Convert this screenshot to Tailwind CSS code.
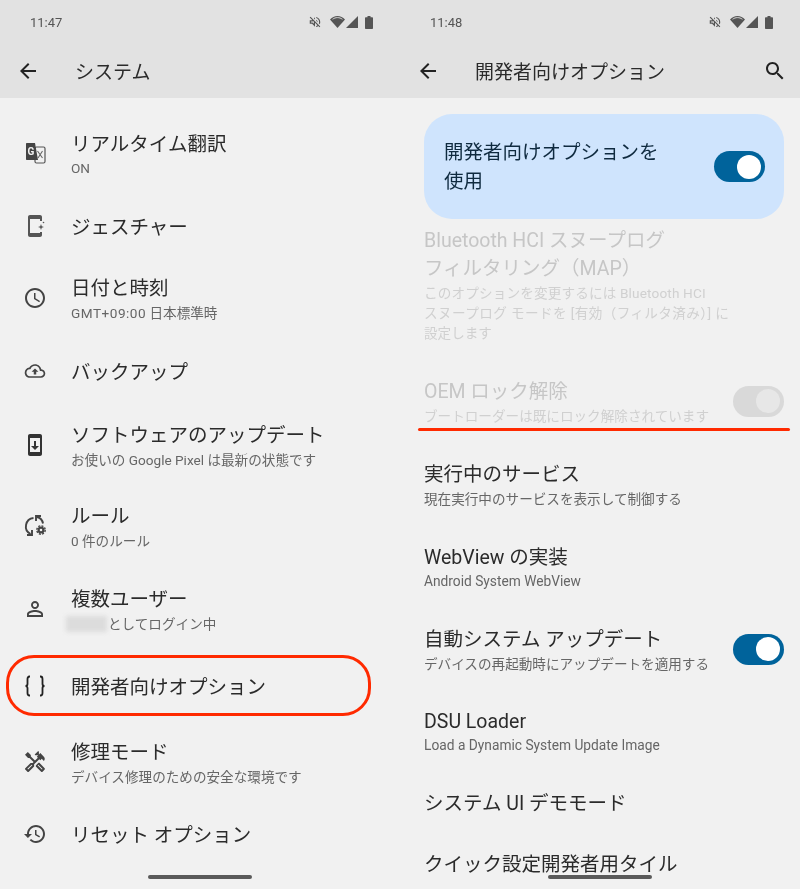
<!DOCTYPE html>
<html lang="ja">
<head>
<meta charset="utf-8">
<script src="https://cdn.jsdelivr.net/npm/@tailwindcss/browser@4"></script>
</head>
<body class="bg-[#f1f1f1]">
<div class="relative w-[800px] h-[889px] overflow-hidden flex blur-[0.35px] [font-family:Roboto,'Noto_Sans_CJK_JP',sans-serif] text-[#2b2b2b]">

  <!-- LEFT -->
  <section class="relative w-[400px] h-[889px] shrink-0 bg-[#f1f1f1]">
    <header class="h-[98px] bg-[#e2e2e2]">
      <div class="h-[44px] flex items-center justify-between pl-[30px] pr-[27px] text-[#555]">
        <span class="text-[13px] leading-none">11:47</span>
        <div class="flex items-center">
          <svg class="w-[14px] h-[14px]" viewBox="0 0 24 24" fill="#555"><path d="M4.340 2.930L2.930 4.340 7.290 8.700 7 9H3v6h4l5 5v-6.590l4.180 4.180c-.65.49-1.380.88-2.180 1.110v2.060c1.340-.3 2.570-.92 3.610-1.750l2.050 2.050 1.410-1.410L4.340 2.930zM10 15.170L7.830 13H5v-2h2.830l.88-.88L10 11.410v3.760zM19 12c0 .82-.15 1.610-.41 2.340l1.530 1.530c.56-1.170.88-2.480.88-3.870 0-4.280-2.990-7.860-7-8.770v2.060c2.890.86 5 3.540 5 6.710zm-7-8l-1.880 1.880L12 7.760zm4.500 8c0-1.770-1.020-3.290-2.500-4.030v1.790l2.480 2.480c.01-.08.02-.16.02-.24z"/></svg>
          <svg class="ml-[8px] w-[15px] h-[12px]" viewBox="0 0 15 12" fill="#555"><path d="M7.500 12L0 3.400C2 1.300 4.600 0 7.500 0S13 1.300 15 3.400z"/><path d="M2.600 3.300C4 2.200 5.700 1.600 7.500 1.600s3.500.6 4.900 1.700" stroke="#e2e2e2" stroke-width=".9" fill="none"/></svg>
          <svg class="ml-[1px] w-[12px] h-[12px]" viewBox="0 0 12 12" fill="#555"><path d="M12 0v12H0z"/></svg>
          <svg class="ml-[7px] w-[8px] h-[13px]" viewBox="0 0 8 13" fill="#555"><path d="M2.500 0h3v1.200H7c.6 0 1 .4 1 1V12c0 .6-.4 1-1 1H1c-.6 0-1-.4-1-1V2.200c0-.6.4-1 1-1h1.500z"/></svg>
        </div>
      </div>
      <div class="h-[54px] flex items-center pl-[16px]">
        <svg class="w-[24px] h-[24px]" viewBox="0 0 24 24" fill="#222"><path d="M20 11H7.830l5.590-5.590L12 4l-8 8 8 8 1.410-1.410L7.830 13H20v-2z"/></svg>
        <h1 class="ml-[35px] h-[28px] pt-[2px] text-[19px] font-normal leading-[28px]">システム</h1>
      </div>
    </header>

    <div class="flex flex-col pl-[23px] pt-[31px]">
      <div class="flex items-center gap-[24px]">
        <svg class="w-[24px] h-[24px]" viewBox="0 0 24 24">
          <rect x="12" y="5" width="10" height="16" rx="1.500" fill="#f1f1f1" stroke="#555" stroke-width="1.200"/>
          <path d="M14.500 9l5 7M19.500 9l-4.500 7" stroke="#666" stroke-width="1.100" fill="none"/>
          <path d="M4 1h8l3 17H4c-.8 0-1-.5-1-1V2c0-.6.4-1 1-1z" fill="#444"/>
          <text x="4.500" y="12.500" font-size="10" font-weight="700" fill="#f1f1f1" font-family="Roboto">G</text>
        </svg>
        <div class="flex flex-col">
          <span class="pt-[2px] text-[19.500px] leading-[28px]">リアルタイム翻訳</span>
          <span class="pb-[2px] text-[13.600px] leading-[18px] text-[#666]">ON</span>
        </div>
      </div>

      <div class="mt-[33px] flex items-center gap-[24px]">
        <svg class="w-[24px] h-[24px]" viewBox="0 0 24 24" fill="#555"><path d="M17 1H7C5.900 1 5 1.900 5 3v18c0 1.100.9 2 2 2h10c1.100 0 2-.9 2-2v-3h-2v1H7V5h10v2h2V3c0-1.100-.9-2-2-2z"/><path d="M18 10l-.8 2.200L15 13l2.200.8L18 16l.8-2.200L21 13l-2.200-.8z"/><circle cx="20.500" cy="8.500" r=".8"/></svg>
        <span class="h-[28px] pt-[2px] text-[19.500px] leading-[28px]">ジェスチャー</span>
      </div>

      <div class="mt-[33px] flex items-center gap-[24px]">
        <svg class="w-[24px] h-[24px]" viewBox="0 0 24 24" fill="#444"><path d="M11.990 2C6.470 2 2 6.480 2 12s4.470 10 9.990 10C17.520 22 22 17.520 22 12S17.520 2 11.990 2zM12 20c-4.420 0-8-3.580-8-8s3.580-8 8-8 8 3.580 8 8-3.580 8-8 8zm.5-13H11v6l5.250 3.150.75-1.230-4.500-2.670z"/></svg>
        <div class="flex flex-col">
          <span class="pt-[2px] text-[19.500px] leading-[28px]">日付と時刻</span>
          <span class="text-[13.600px] leading-[20px] text-[#666]"><span class="tracking-[0.5px]">GMT+09:00</span> 日本標準時</span>
        </div>
      </div>

      <div class="mt-[34px] flex items-center gap-[24px]">
        <svg class="w-[24px] h-[24px]" viewBox="-2 -2 28 28" fill="#444"><path d="M19.350 10.040C18.670 6.590 15.640 4 12 4 9.110 4 6.600 5.640 5.350 8.040 2.340 8.360 0 10.910 0 14c0 3.310 2.690 6 6 6h13c2.760 0 5-2.240 5-5 0-2.640-2.050-4.780-4.650-4.960zM19 18H6c-2.210 0-4-1.790-4-4 0-2.050 1.530-3.760 3.560-3.970l1.070-.11.5-.95C8.080 7.140 9.940 6 12 6c2.620 0 4.880 1.860 5.390 4.430l.3 1.500 1.530.11c1.560.1 2.780 1.410 2.780 2.960 0 1.650-1.350 3-3 3zM8 13h2.550v3h2.900v-3H16l-4-4z"/></svg>
        <span class="h-[28px] pt-[2px] text-[19.500px] leading-[28px]">バックアップ</span>
      </div>

      <div class="mt-[35px] flex items-center gap-[24px]">
        <svg class="w-[24px] h-[24px]" viewBox="0 0 24 24" fill="#333"><path d="M17 1.010L7 1c-1.100 0-2 .9-2 2v18c0 1.100.9 2 2 2h10c1.100 0 2-.9 2-2V3c0-1.100-.9-1.990-2-1.990zM17 19H7V5h10v14zm-1-6h-3V8h-2v5H8l4 4 4-4z"/></svg>
        <div class="flex flex-col">
          <span class="pt-[2px] text-[19.500px] leading-[28px]">ソフトウェアのアップデート</span>
          <span class="text-[13.600px] leading-[20px] text-[#666]">お使いの Google Pixel は最新の状態です</span>
        </div>
      </div>

      <div class="mt-[31px] flex items-center gap-[24px]">
        <svg class="w-[24px] h-[24px]" viewBox="0 0 24 24" fill="none" stroke="#444" stroke-width="1.900">
          <path d="M10.500 4A8.500 8.500 0 0 0 7.500 20"/><path d="M4 21h5v-5"/>
          <path d="M20 9.500A8 8 0 0 0 14 3"/><path d="M18 2h-5v5"/>
          <circle cx="18" cy="16" r="2.400" stroke-width="2.200"/>
          <circle cx="18" cy="16" r="4.200" stroke-width="1.400" stroke-dasharray="2 1.300"/>
        </svg>
        <div class="flex flex-col">
          <span class="pt-[2px] text-[19.500px] leading-[28px]">ルール</span>
          <span class="text-[13.600px] leading-[20px] text-[#666]">0 件のルール</span>
        </div>
      </div>

      <div class="mt-[33px] flex items-center gap-[24px]">
        <svg class="w-[24px] h-[24px]" viewBox="0 0 24 24" fill="#444"><path d="M12 5.900c1.160 0 2.100.94 2.100 2.100s-.94 2.100-2.100 2.100S9.900 9.160 9.900 8s.94-2.100 2.100-2.100m0 9c2.970 0 6.100 1.460 6.100 2.100v1.100H5.900V17c0-.64 3.130-2.100 6.100-2.100M12 4C9.790 4 8 5.790 8 8s1.790 4 4 4 4-1.790 4-4-1.790-4-4-4zm0 9c-2.670 0-8 1.340-8 4v3h16v-3c0-2.660-5.330-4-8-4z"/></svg>
        <div class="flex flex-col">
          <span class="pt-[2px] text-[19.500px] leading-[28px]">複数ユーザー</span>
          <span class="relative text-[13.600px] leading-[20px] text-[#666] pl-[37px]">としてログイン中
            <span class="absolute left-[-5px] top-[2px] w-[41px] h-[16px] bg-[#dcdcdc] blur-[2px]"></span>
          </span>
        </div>
      </div>

      <div class="mt-[38px] flex items-center gap-[24px]">
        <svg class="w-[24px] h-[24px]" viewBox="0 0 24 24" fill="none" stroke="#222" stroke-width="1.800"><path d="M7 2.500h-.5C5 2.500 4.500 3.500 4.500 5v5c0 1-1 2-2 2 1 0 2 1 2 2v5c0 1.500.5 2.500 2 2.500H7"/><path d="M17 2.500h.5c1.500 0 2 1 2 2.500v5c0 1 1 2 2 2-1 0-2 1-2 2v5c0 1.500-.5 2.500-2 2.500H17"/></svg>
        <span class="h-[28px] pt-[2px] text-[19.500px] leading-[28px]">開発者向けオプション</span>
      </div>

      <div class="mt-[37px] flex items-center gap-[24px]">
        <svg class="w-[24px] h-[24px]" viewBox="0 0 24 24" fill="#444"><path d="M21.670 18.170l-5.300-5.300h-.99l-2.540 2.540v.99l5.300 5.300c.39.39 1.020.39 1.410 0l2.120-2.120c.39-.38.39-1.020 0-1.410zm-2.830 1.420l-4.240-4.240.71-.71 4.240 4.240-.71.71z"/><path d="M17.340 10.190l1.410-1.410 2.120 2.120c1.170-1.170 1.170-3.070 0-4.240l-3.540-3.540-1.410 1.410V1.710l-.7-.71-3.540 3.540.71.71h2.830l-1.410 1.410 1.060 1.060-2.890 2.890-4.130-4.130V5.060L4.830 2.040 2 4.870 5.030 7.900h1.410l4.130 4.130-.85.85H7.600l-5.300 5.300c-.39.39-.39 1.020 0 1.410l2.120 2.120c.39.39 1.020.39 1.410 0l5.300-5.300v-2.120l5.150-5.150 1.060 1.050zm-7.980 5.150l-4.240 4.240-.71-.71 4.240-4.240.71.71z"/></svg>
        <div class="flex flex-col">
          <span class="pt-[2px] text-[19.500px] leading-[28px]">修理モード</span>
          <span class="text-[13.600px] leading-[20px] text-[#666]">デバイス修理のための安全な環境です</span>
        </div>
      </div>

      <div class="mt-[33px] flex items-center gap-[24px]">
        <svg class="w-[24px] h-[24px]" viewBox="0 0 24 24" fill="#444"><path d="M13 3c-4.970 0-9 4.030-9 9H1l3.890 3.890.07.14L9 12H6c0-3.870 3.130-7 7-7s7 3.130 7 7-3.130 7-7 7c-1.930 0-3.680-.79-4.940-2.060l-1.420 1.420C8.270 19.990 10.510 21 13 21c4.970 0 9-4.030 9-9s-4.030-9-9-9zm-1 5v5l4.280 2.540.72-1.210-3.500-2.080V8H12z"/></svg>
        <span class="h-[28px] pt-[2px] text-[19.500px] leading-[28px]">リセット オプション</span>
      </div>
    </div>

    <div class="absolute left-[6px] top-[655px] w-[365px] h-[61px] rounded-[28px] border-[3px] border-[#ff2a00]"></div>
    <div class="absolute left-[148px] top-[875px] w-[104px] h-[4px] rounded-full bg-[#5a5a5a]"></div>
  </section>

  <!-- RIGHT -->
  <section class="relative w-[400px] h-[889px] shrink-0 bg-[#f1f1f1]">
    <header class="h-[98px] bg-[#e2e2e2]">
      <div class="h-[44px] flex items-center justify-between pl-[30px] pr-[27px] text-[#555]">
        <span class="text-[13px] leading-none">11:48</span>
        <div class="flex items-center">
          <svg class="w-[14px] h-[14px]" viewBox="0 0 24 24" fill="#555"><path d="M4.340 2.930L2.930 4.340 7.290 8.700 7 9H3v6h4l5 5v-6.590l4.180 4.180c-.65.49-1.380.88-2.180 1.110v2.060c1.340-.3 2.570-.92 3.610-1.750l2.050 2.050 1.410-1.410L4.340 2.930zM10 15.170L7.830 13H5v-2h2.830l.88-.88L10 11.410v3.760zM19 12c0 .82-.15 1.610-.41 2.340l1.530 1.530c.56-1.170.88-2.480.88-3.870 0-4.280-2.990-7.860-7-8.770v2.060c2.890.86 5 3.540 5 6.710zm-7-8l-1.880 1.880L12 7.760zm4.500 8c0-1.770-1.020-3.290-2.500-4.030v1.790l2.480 2.480c.01-.08.02-.16.02-.24z"/></svg>
          <svg class="ml-[8px] w-[15px] h-[12px]" viewBox="0 0 15 12" fill="#555"><path d="M7.500 12L0 3.400C2 1.300 4.600 0 7.500 0S13 1.300 15 3.400z"/><path d="M2.600 3.300C4 2.200 5.700 1.600 7.500 1.600s3.500.6 4.900 1.700" stroke="#e2e2e2" stroke-width=".9" fill="none"/></svg>
          <svg class="ml-[1px] w-[12px] h-[12px]" viewBox="0 0 12 12" fill="#555"><path d="M12 0v12H0z"/></svg>
          <svg class="ml-[7px] w-[8px] h-[13px]" viewBox="0 0 8 13" fill="#555"><path d="M2.500 0h3v1.200H7c.6 0 1 .4 1 1V12c0 .6-.4 1-1 1H1c-.6 0-1-.4-1-1V2.200c0-.6.4-1 1-1h1.500z"/></svg>
        </div>
      </div>
      <div class="h-[54px] flex items-center pl-[16px] pr-[13px]">
        <svg class="w-[24px] h-[24px]" viewBox="0 0 24 24" fill="#222"><path d="M20 11H7.830l5.590-5.590L12 4l-8 8 8 8 1.410-1.410L7.830 13H20v-2z"/></svg>
        <h1 class="ml-[35px] h-[28px] pt-[2px] text-[19px] font-normal leading-[28px]">開発者向けオプション</h1>
        <svg class="ml-auto w-[24px] h-[24px]" viewBox="0 0 24 24" fill="#222"><path d="M15.500 14h-.79l-.28-.27C15.410 12.590 16 11.110 16 9.500 16 5.910 13.090 3 9.500 3S3 5.910 3 9.500 5.910 16 9.500 16c1.610 0 3.090-.59 4.230-1.570l.27.28v.79l5 4.990L20.490 19l-4.990-5zm-6 0C7.010 14 5 11.990 5 9.500S7.010 5 9.500 5 14 7.010 14 9.500 11.990 14 9.500 14z"/></svg>
      </div>
    </header>

    <div class="flex flex-col pl-[24px] pr-[16px] pt-[16px]">
      <div class="h-[105px] rounded-[28px] bg-[#cfe4fd] flex items-center justify-between pl-[20px] pr-[19px]">
        <span class="pt-[1px] text-[19.500px] leading-[29px] text-[#0f2a3f]">開発者向けオプションを<br>使用</span>
        <div class="w-[51px] h-[31px] rounded-full bg-[#00639b] flex items-center justify-end pr-[4px]"><div class="w-[24px] h-[24px] rounded-full bg-white"></div></div>
      </div>

      <div class="mt-[6px] flex flex-col">
        <span class="pt-[2px] text-[19.500px] leading-[28px] text-[#c6c6c6]">Bluetooth HCI スヌープログ<br>フィルタリング（MAP）</span>
        <span class="text-[13.600px] leading-[20px] text-[#d0d0d0]"><span class="tracking-[0.15px]">このオプションを変更するには Bluetooth HCI</span><br><span class="tracking-[0.4px]">スヌープログ モードを [有効（フィルタ済み）] に</span><br>設定します</span>
      </div>

      <div class="mt-[33px] flex items-center justify-between">
        <div class="flex flex-col">
          <span class="pt-[2px] text-[19.500px] leading-[28px] text-[#c6c6c6]">OEM ロック解除</span>
          <span class="text-[13.600px] leading-[20px] text-[#d0d0d0]">ブートローダーは既にロック解除されています</span>
        </div>
        <div class="w-[51px] h-[31px] rounded-full bg-[#d9d9d9] flex items-center justify-end pr-[4px]"><div class="w-[24px] h-[24px] rounded-full bg-[#e7e7e7]"></div></div>
      </div>

      <div class="mt-[33px] flex flex-col">
        <span class="pt-[2px] text-[19.500px] leading-[28px]">実行中のサービス</span>
        <span class="text-[13.600px] leading-[20px] text-[#666]">現在実行中のサービスを表示して制御する</span>
      </div>

      <div class="mt-[33px] flex flex-col">
        <span class="pt-[2px] text-[19.500px] leading-[28px]">WebView の実装</span>
        <span class="pb-[2px] text-[13.750px] leading-[18px] text-[#666]">Android System WebView</span>
      </div>

      <div class="mt-[32px] flex items-center justify-between">
        <div class="flex flex-col">
          <span class="pt-[2px] text-[19.500px] leading-[28px]">自動システム アップデート</span>
          <span class="text-[13.600px] leading-[20px] text-[#666]">デバイスの再起動時にアップデートを適用する</span>
        </div>
        <div class="w-[51px] h-[31px] rounded-full bg-[#00639b] flex items-center justify-end pr-[4px]"><div class="w-[24px] h-[24px] rounded-full bg-white"></div></div>
      </div>

      <div class="mt-[32px] flex flex-col">
        <span class="pt-[2px] text-[19.500px] leading-[28px]">DSU Loader</span>
        <span class="pb-[2px] text-[13.750px] leading-[18px] text-[#666]">Load a Dynamic System Update Image</span>
      </div>

      <span class="mt-[32px] h-[28px] pt-[2px] text-[19.500px] leading-[28px]">システム UI デモモード</span>
      <span class="mt-[33px] h-[28px] pt-[2px] text-[19.500px] leading-[28px]">クイック設定開発者用タイル</span>
    </div>

    <div class="absolute left-[18px] top-[428px] w-[372px] h-[3px] rounded-full bg-[#ff2a00]"></div>
    <div class="absolute left-[148px] top-[875px] w-[104px] h-[4px] rounded-full bg-[#5a5a5a]"></div>
  </section>
</div>
</body>
</html>
